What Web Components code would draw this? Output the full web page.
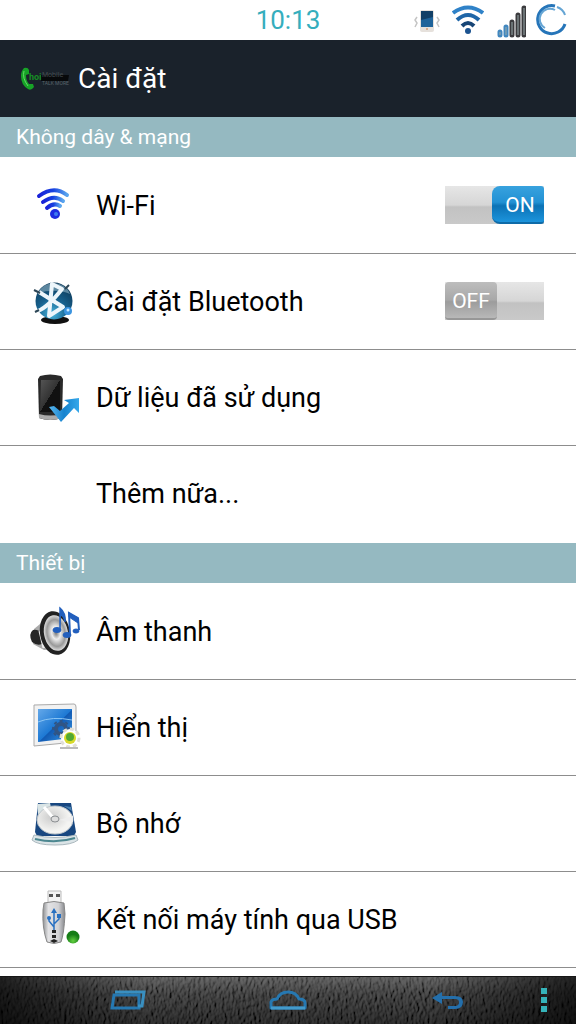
<!DOCTYPE html>
<html lang="vi">
<head>
<meta charset="utf-8">
<meta name="viewport" content="width=device-width, initial-scale=1">
<title>Cài đặt</title>
<style>
  html, body { height: 100%; margin: 0; }
  body { font-family: Roboto, "Noto Sans", sans-serif; color: #000; background: #fff; }
</style>
</head>
<body>
<settings-app></settings-app>

<script>
const define = (name, html, setup) => {
  const template = document.createElement('template');
  template.innerHTML = html;
  customElements.define(name, class extends HTMLElement {
    constructor() {
      super();
      this.attachShadow({ mode: 'open' }).append(template.content.cloneNode(true));
    }
    connectedCallback() { if (setup) setup(this, this.shadowRoot); }
  });
};

/* ---------- icons ---------- */
const icons = {
  wifi: `<svg viewBox="0 0 48 48"><defs><linearGradient id="g" x2="1"><stop stop-color="#1a22d8"/><stop offset=".5" stop-color="#1741e0"/><stop offset="1" stop-color="#5aa6ee"/></linearGradient></defs>
    <g fill="none" stroke="url(#g)" stroke-width="4" stroke-linecap="round"><path d="M7 14Q22 3 35 13"/><path d="M11 20Q22 12 31 19"/><path d="M15 26Q22 20 28 24"/></g>
    <circle cx="23" cy="32" r="5" fill="#1c2ce0"/><circle cx="24" cy="32" r="2" fill="#3c7cf0"/></svg>`,
  bluetooth: `<svg viewBox="0 0 48 48"><defs><radialGradient id="g" cx=".45" cy=".85" r=".9"><stop stop-color="#49b5dc"/><stop offset=".45" stop-color="#17628f"/><stop offset="1" stop-color="#0c3350"/></radialGradient></defs>
    <ellipse cx="23" cy="42" rx="14" ry="4" fill="#111"/><circle cx="22" cy="23" r="18.500" fill="url(#g)"/>
    <path d="M6 15Q11 5 22 5Q34 6 38 16Q24 10 6 15" fill="#8fb4c6" opacity=".6"/>
    <path d="M6 33Q16 29 30 11L20 6L17 38L31 29L7 14" fill="none" stroke="#edf6fb" stroke-width="4" stroke-linejoin="round"/>
    <path d="M3 34L7 32M2 12L8 15M33 11L37 7" stroke="#2d4656" stroke-width="2"/><circle cx="36" cy="33" r="4" fill="#3b94df"/><circle cx="36" cy="32" r="1.500" fill="#c7e8ff"/></svg>`,
  data: `<svg viewBox="0 0 48 48"><defs><linearGradient id="g" x2="1" y2="1"><stop stop-color="#555"/><stop offset=".5" stop-color="#333"/><stop offset=".5" stop-color="#111"/></linearGradient><linearGradient id="a" x2="1"><stop stop-color="#58b6ee"/><stop offset=".5" stop-color="#1683cf"/><stop offset="1" stop-color="#35a8ea"/></linearGradient></defs>
    <path d="M8 2Q18-1 29 2L31 5L30 44Q18 48 7 44L6 5Z" fill="#292929"/><path d="M9 6H28V38H8Z" fill="url(#g)"/><path d="M7 40Q18 43 30 40V44Q18 48 7 44Z" fill="#aaa"/>
    <path d="M17 33L22 32L28 37L37 29L32 26L47 24L47 39L42 34L29 48Z" fill="url(#a)"/></svg>`,
  sound: `<svg viewBox="0 0 48 48"><defs><radialGradient id="g"><stop stop-color="#777"/><stop offset=".35" stop-color="#eee"/><stop offset=".75" stop-color="#999"/><stop offset="1" stop-color="#ddd"/></radialGradient></defs>
    <g transform="translate(-2 -2)"><path d="M4 23L16 13L25 43L14 44L3 38Z" fill="#aaa"/><path d="M3 24Q8 23 11 27L12 38Q7 40 2 36Q-2 28 3 24" fill="#262626"/><path d="M10 25L14 42" stroke="#eee" stroke-width="3"/>
    <ellipse cx="25" cy="27" rx="15" ry="22" transform="rotate(-10 25 27)" fill="#222"/><ellipse cx="26" cy="27" rx="12" ry="18" transform="rotate(-10 26 27)" fill="url(#g)"/></g>
    <g fill="#225fbd" stroke="#225fbd" transform="translate(-1 -3)"><ellipse cx="26" cy="25" rx="4" ry="2.500"/><path d="M29 25L29 3Q35 8 34 17Q33 11 30 10" stroke-width="1.500"/><ellipse cx="36" cy="30" rx="4" ry="2.500"/><path d="M39 30L38 8L47 13L48 25" fill="none" stroke-width="2"/><path d="M38 8L47 13V18L38 12Z"/><ellipse cx="45" cy="26" rx="3" ry="2"/></g></svg>`,
  display: `<svg viewBox="0 0 48 48"><defs><linearGradient id="g" y2="1"><stop stop-color="#64a8e9"/><stop offset=".5" stop-color="#1d79d4"/><stop offset=".52" stop-color="#125bb4"/><stop offset="1" stop-color="#3c9be7"/></linearGradient></defs>
    <path d="M2 1L42 0Q44 0 44 3V38L2 42Z" fill="#f2f2f2" stroke="#aaa"/><path d="M6 5H40V34L6 38Z" fill="url(#g)"/><path d="M6 18Q20 12 40 16" fill="none" stroke="#8bc5f4"/>
    <circle cx="29" cy="25" r="5" fill="none" stroke="#315584" stroke-width="4"/><circle cx="29" cy="25" r="8" fill="none" stroke="#315584" stroke-width="2" stroke-dasharray="3 3"/>
    <circle cx="38" cy="34" r="9" fill="#fff"/><circle cx="38" cy="34" r="9" fill="none" stroke="#e1dfd7" stroke-width="3" stroke-dasharray="4 3"/><circle cx="38" cy="34" r="6" fill="#d8d929"/><circle cx="38" cy="33" r="4" fill="#52a832"/><path d="M28 44H46" stroke="#bbb" stroke-width="2"/></svg>`,
  storage: `<svg viewBox="0 0 48 48"><defs><radialGradient id="g" cx=".4" cy=".4"><stop stop-color="#ccc"/><stop offset="1" stop-color="#f4f4f2"/></radialGradient></defs>
    <path d="M6 3H39L44 32L42 36H5L3 32Z" fill="#184780"/><path d="M5 4L18 3L20 12L6 14Z" fill="#d9e4e5"/><ellipse cx="23" cy="20" rx="18" ry="14" fill="url(#g)" stroke="#bdc5ca"/><path d="M23 20L12 7" stroke="#fff" stroke-width="3"/><path d="M27 20L41 16V22Z" fill="#eee"/><ellipse cx="23" cy="19" rx="4" ry="3" fill="#ddd" stroke="#8a8e91"/><path d="M32 6L39 7L40 11Z" fill="#4c83b2"/>
    <path d="M2 35Q23 40 44 35L46 40Q40 45 23 45Q5 45 0 40Z" fill="#dbe4e7" stroke="#aab8be"/><path d="M3 39Q24 44 43 38" fill="none" stroke="#4c8790" stroke-width="2"/></svg>`,
  usb: `<svg viewBox="0 0 48 54"><defs><linearGradient id="g" x2="1"><stop stop-color="#8e9093"/><stop offset=".25" stop-color="#e3e3e5"/><stop offset=".7" stop-color="#d2d2d5"/><stop offset="1" stop-color="#85878b"/></linearGradient><radialGradient id="d" cx=".5" cy=".8"><stop stop-color="#62d03f"/><stop offset="1" stop-color="#157c16"/></radialGradient></defs>
    <g transform="translate(0 -3)"><path d="M16 1H29V13H16Z" fill="#f4f4f4" stroke="#bbb"/><path d="M17 4H21V7H17ZM24 4H28V7H24Z" fill="#555"/><path d="M12 13Q22 10 32 13L33 24Q32 44 29 52Q22 55 15 52Q10 38 11 20Z" fill="url(#g)" stroke="#888"/>
    <g fill="none" stroke="#2870c1" stroke-width="1.500"><path d="M22 20V41M22 37L17 31V27M22 34L27 29V25"/></g><path d="M22 18L25 23H19Z" fill="#2870c1"/><circle cx="17" cy="28" r="2" fill="#2870c1"/><path d="M25 24H29V28H25Z" fill="#2870c1"/><path d="M20 40H24V43H20ZM20 45H24V48H20ZM18 51L22 49L26 51L22 53Z" fill="#222"/>
    <circle cx="41" cy="47" r="6.500" fill="url(#d)"/></g></svg>`
};

/* ---------- status bar ---------- */
define('status-bar', `
<style>
  :host { display: grid; grid-template-columns: 1fr auto 1fr; align-items: center; height: 40px; flex: none; background: #fff; }
  time { grid-column: 2; font-size: 26px; line-height: 40px; color: #35aebd; }
  .icons { display: flex; justify-content: flex-end; align-items: center; gap: 10px; padding-right: 8px; }
  svg { display: block; }
</style>
<time>10:13</time>
<div class="icons">
  <svg width="28" height="24" viewBox="0 0 28 24" aria-hidden="true"><rect x="6" y="2" width="14" height="22" rx="2" fill="#e6e1dc"/><path d="M7 3H19V19H7Z" fill="#123f66"/><path d="M7 12L19 9V19H7Z" fill="#1f639a"/><circle cx="13" cy="21" r="1" fill="#d49b75"/><path d="M3 9L1 12L3 15L1 19M23 9L25 12L23 15L25 19" fill="none" stroke="#c4c4c4" stroke-width="1.500"/></svg>
  <svg width="32" height="32" viewBox="0 0 32 32" aria-hidden="true"><g fill="none" stroke-width="4"><path d="M1 9Q16-2 31 9" stroke="#2f82c8"/><path d="M5 16Q16 6 27 16" stroke="#1f66a8"/><path d="M10 22Q16 16 22 22" stroke="#174576"/></g><circle cx="16" cy="27" r="3" fill="#1c5390"/></svg>
  <svg width="32" height="36" viewBox="0 0 32 36" aria-hidden="true"><g transform="translate(1 1)"><g stroke-width="5" stroke-linecap="round"><path d="M5 29V32M11 24V32" stroke="#4187bf"/><path d="M17 19V32M23 12V32M29 5V32" stroke="#3b3b3e"/></g><g stroke-width="1" stroke="#9aa"><path d="M5 29V32M11 24V32M17 19V32M23 12V32M29 5V32"/></g></g></svg>
  <svg width="32" height="32" viewBox="0 0 32 32" aria-hidden="true"><path d="M19 2A14 14 0 1 0 29 20" fill="none" stroke="#2675b9" stroke-width="3"/><path d="M19 6A10 10 0 0 0 9 24M21 3Q27 5 29 11" fill="none" stroke="#65a5d4" stroke-width="2"/></svg>
</div>`);

/* ---------- title bar ---------- */
define('title-bar', `
<style>
  :host { display: flex; align-items: center; gap: 8px; height: 77px; flex: none; padding: 0 20px; background: #1a222b; color: #fff; box-sizing: border-box; }
  h1 { margin: 0; font-size: 28px; line-height: 36px; font-weight: 400; }
  svg { display: block; }
</style>
<svg width="50" height="28" viewBox="0 0 50 28" aria-hidden="true">
  <path d="M4 3Q8 2 9 5L9 9L6 10Q6 16 9 19L13 19L14 22Q11 26 8 24Q1 20 1 11Q1 6 4 3" fill="#17a327"/><path d="M4 6Q2 13 8 21" stroke="#63d865" fill="none"/>
  <path d="M21 10H49L48 16H21Z" fill="#07090b"/>
  <text x="9" y="15" font-size="9" font-weight="700" fill="#168c24">hoi</text>
  <text x="22" y="12" font-size="7" fill="#454c50">Mobile</text>
  <text x="22" y="20" font-size="5" fill="#59636a">TALK MORE</text>
</svg>
<h1><slot></slot></h1>`);

/* ---------- list pieces ---------- */
define('settings-group', `
<style>
  :host { display: block; margin-bottom: 1px; }
  h2 { margin: 0 0 1px; padding: 0 16px; font-size: 21px; line-height: 40px; font-weight: 400; color: #fff; background: #95b9c1; }
</style>
<h2></h2><slot></slot>`, (host, root) => { root.querySelector('h2').textContent = host.getAttribute('heading'); });

define('settings-row', `
<style>
  :host { display: flex; align-items: center; height: 96px; box-sizing: border-box; padding: 0 32px; border-bottom: 1px solid #8d8d8d; }
  .icon { flex: none; width: 48px; height: 48px; margin-right: 16px; display: flex; align-items: center; }
  .icon svg { display: block; width: 48px; overflow: visible; }
  a { flex: 1; font-size: 27px; line-height: 94px; color: #000; text-decoration: none; white-space: nowrap; }
</style>
<span class="icon" aria-hidden="true"></span><a href="#"><slot></slot></a><slot name="control"></slot>`,
(host, root) => { root.querySelector('.icon').innerHTML = icons[host.getAttribute('icon')] || ''; });

define('toggle-switch', `
<style>
  :host { display: block; flex: none; margin-bottom: 2px; }
  label { display: flex; width: 99px; height: 38px; background: linear-gradient(#e6e6e6, #d6d6d6 50%, #c2c2c2 55%, #c9c9c9); cursor: pointer; }
  input { position: absolute; opacity: 0; margin: 0; }
  .thumb { box-sizing: border-box; width: 52px; border-radius: 4px; color: #fff; font-size: 21px; line-height: 38px; text-align: center; background: linear-gradient(#bdbdbd, #a8a8a8 50%, #9c9c9c 55%, #b8b8b8); border-bottom: 2px solid #979797; }
  input:checked + .thumb { margin-left: auto; border-radius: 8px 3px 3px 8px; background: linear-gradient(#38a2de, #2291d4 45%, #0c72b5 55%, #1c94dc); border-bottom-color: #0f6ba8; padding-left: 4px; }
</style>
<label><input type="checkbox" role="switch"><span class="thumb"></span></label>`,
(host, root) => {
  const input = root.querySelector('input'), thumb = root.querySelector('.thumb');
  const update = () => { thumb.textContent = input.checked ? 'ON' : 'OFF'; };
  input.checked = host.hasAttribute('on');
  input.setAttribute('aria-label', host.getAttribute('label'));
  input.addEventListener('change', update);
  update();
});

/* ---------- navigation bar ---------- */
define('nav-bar', `
<style>
  :host { position: relative; display: block; height: 48px; flex: none; background: #1c1c1c; overflow: hidden; }
  .leather { position: absolute; inset: 0; width: 100%; height: 100%; }
  .shade { position: absolute; inset: 0; border-top: 1px solid #161616; background: linear-gradient(90deg, #000a, #0000 25%, #0000 75%, #000a), linear-gradient(#8886, #3333 35%, #0006); }
  nav { position: relative; height: 48px; display: grid; grid-template-columns: 48fr 160fr 160fr 160fr 48fr; align-items: center; justify-items: center; }
  button { background: none; border: 0; padding: 0; height: 48px; display: flex; align-items: center; cursor: pointer; }
  .menu { grid-column: 5; margin-right: 16px; }
</style>
<svg class="leather" aria-hidden="true"><filter id="n" x="0" y="0" width="100%" height="100%"><feTurbulence type="fractalNoise" baseFrequency=".38 .2" numOctaves="2" seed="8"/><feDiffuseLighting lighting-color="#5c5c5c" surfaceScale="2"><feDistantLight azimuth="200" elevation="36"/></feDiffuseLighting></filter><rect width="100%" height="100%" filter="url(#n)"/></svg>
<div class="shade"></div>
<nav>
  <span></span>
  <button aria-label="Ứng dụng gần đây"><svg width="36" height="22" viewBox="0 0 36 22" fill="none" stroke="#2678b1" stroke-width="3"><path d="M4 6H29V19H2Z"/><path d="M5 3H34L32 17H28" stroke="#398fc0"/></svg></button>
  <button aria-label="Trang chủ"><svg width="38" height="22" viewBox="0 0 38 22" fill="none" stroke="#2678b1" stroke-width="3" stroke-linejoin="round"><path d="M2 19V13Q3 10 8 10Q11 3 19 3Q27 3 30 10Q36 10 36 14V19Z"/><path d="M2 19H36" stroke="#439acb"/></svg></button>
  <button aria-label="Quay lại"><svg width="34" height="22" viewBox="0 0 34 22"><path d="M1 9L11 3V7H24Q32 7 32 13Q32 20 24 20H17V17H24Q28 17 28 13Q28 10 24 10H11V15Z" fill="#246fab"/></svg></button>
  <button class="menu" aria-label="Tùy chọn"><svg width="6" height="26" viewBox="0 0 6 26" fill="#35b3b9"><path d="M0 1H6V7H0ZM0 10H6V16H0ZM0 19H6V25H0Z"/></svg></button>
</nav>`);

define('settings-app', `
<style>
  :host { display: flex; flex-direction: column; height: 100vh; }
  main { flex: 1; min-height: 0; overflow: hidden; background: #fff; }
</style>
<status-bar></status-bar>
<title-bar>Cài đặt</title-bar>
<main>
  <settings-group heading="Không dây &amp; mạng">
    <settings-row icon="wifi">Wi-Fi<toggle-switch slot="control" label="Wi-Fi" on></toggle-switch></settings-row>
    <settings-row icon="bluetooth">Cài đặt Bluetooth<toggle-switch slot="control" label="Cài đặt Bluetooth"></toggle-switch></settings-row>
    <settings-row icon="data">Dữ liệu đã sử dụng</settings-row>
    <settings-row style="border-color:transparent">Thêm nữa...</settings-row>
  </settings-group>
  <settings-group heading="Thiết bị">
    <settings-row icon="sound">Âm thanh</settings-row>
    <settings-row icon="display">Hiển thị</settings-row>
    <settings-row icon="storage">Bộ nhớ</settings-row>
    <settings-row icon="usb">Kết nối máy tính qua USB</settings-row>
  </settings-group>
</main>
<nav-bar></nav-bar>`);
</script>
</body>
</html>
